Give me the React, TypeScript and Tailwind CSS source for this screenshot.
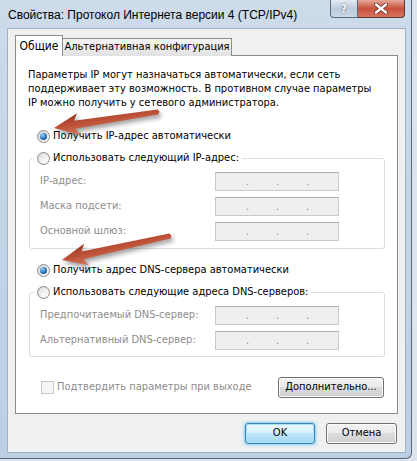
import React from "react";

const body = "font-['DejaVu_Sans_Condensed','DejaVu_Sans',sans-serif] font-stretch-condensed text-[11px]";

function Radio({ checked }: { checked?: boolean }) {
  return (
    <span className="flex h-[13px] w-[13px] shrink-0 items-center justify-center rounded-full border border-[#8c8c8c] bg-linear-to-br from-[#d4d4d4] to-[#fbfbfb]">
      {checked ? (
        <span className="h-[7px] w-[7px] rounded-full bg-[radial-gradient(circle_at_35%_30%,#9ad4ff,#2a72b8_55%,#0d3f75)]" />
      ) : (
        <span className="h-[9px] w-[9px] rounded-full bg-linear-to-br from-[#e2e2e2] to-[#ffffff]" />
      )}
    </span>
  );
}

function IpBox() {
  return (
    <div className="flex h-[19px] w-[124px] items-end border border-[#cacaca] border-t-[#adadad] bg-[#efefef] pb-[3px] pl-[30px] leading-[11px] text-[#8a8a8a]">
      <span className="w-[30px]">.</span>
      <span className="w-[30px]">.</span>
      <span className="w-[30px]">.</span>
    </div>
  );
}

function Field({ label }: { label: string }) {
  return (
    <div className="flex h-[19px] items-center pl-[10px]">
      <span className="w-[175px] text-[#8d8d8d]">{label}</span>
      <IpBox />
    </div>
  );
}

function Arrow({ x1, y1, x2, y2 }: { x1: number; y1: number; x2: number; y2: number }) {
  const dx = x2 - x1;
  const dy = y2 - y1;
  const L = Math.sqrt(dx * dx + dy * dy);
  const ang = (Math.atan2(dy, dx) * 180) / Math.PI;
  const pts = `0,0 -25,-11 -21,-4 ${-L},-2.6 ${-L - 1.5},0 ${-L},2.6 -21,4 -25,11`;
  return (
    <g>
      <g transform={`translate(${x2 + 2},${y2 + 3}) rotate(${ang})`} filter="url(#blur)">
        <polygon points={pts} fill="#2a2a2a" opacity="0.45" />
      </g>
      <g transform={`translate(${x2},${y2}) rotate(${ang})`}>
        <polygon points={pts} fill="url(#arrowGrad)" />
      </g>
    </g>
  );
}

function Button({ children, w, primary }: { children: React.ReactNode; w: string; primary?: boolean }) {
  return (
    <div
      className={
        primary
          ? `${w} flex h-[21px] items-center justify-center rounded-[3px] border border-[#3c7fb1] bg-[linear-gradient(180deg,#eaf6fd_0%,#d9f0fc_45%,#bee6fd_50%,#a7d9f5_100%)] shadow-[0_0_3px_1px_#7fd0f5,inset_0_0_0_1px_#a6e3ff]`
          : `${w} flex h-[21px] items-center justify-center rounded-[3px] border border-[#707070] bg-[linear-gradient(180deg,#f2f2f2_0%,#ebebeb_45%,#dddddd_50%,#cfcfcf_100%)] shadow-[inset_0_0_0_1px_#fbfbfb]`
      }
    >
      {children}
    </div>
  );
}

export default function App() {
  return (
    <div className={`relative h-[461px] w-[417px] overflow-hidden bg-[#dde4ec] ${body} text-black`}>
      <div className="h-[459px] w-[412px] rounded-br-[6px] border-b border-r border-[#55677c] bg-linear-to-b from-[#cddbea] via-[#c2d4e6] to-[#bcd0e4]">
        <div className="flex h-[28px] items-start justify-between">
          <div className="pl-[8px] pt-[7px] font-['Liberation_Sans',sans-serif] text-[12px] leading-[16px] text-[#000]">
            Свойства: Протокол Интернета версии 4 (TCP/IPv4)
          </div>
          <div className="mr-[6px] flex">
            <div className="flex h-[18px] w-[28px] items-center justify-center rounded-bl-[4px] border border-t-0 border-[#5b6b7e] bg-linear-to-b from-[#e4ebf3] via-[#bccbdc] to-[#c8d6e5] font-['DejaVu_Sans',sans-serif] text-[12px] font-bold text-[#f4f7fa] [text-shadow:0_0_2px_#44556a]">
              ?
            </div>
            <div className="flex h-[18px] w-[47px] items-center justify-center rounded-br-[4px] border border-l-0 border-t-0 border-[#5b3a34] bg-linear-to-b from-[#e5a89a] via-[#c9503a] to-[#d7735d]">
              <svg width="14" height="11" viewBox="0 0 14 11">
                <path d="M2 1.5 L12 9.5 M12 1.5 L2 9.5" stroke="#6b2a20" strokeWidth="4" strokeLinecap="round" />
                <path d="M2 1.5 L12 9.5 M12 1.5 L2 9.5" stroke="#ffffff" strokeWidth="2.4" strokeLinecap="round" />
              </svg>
            </div>
          </div>
        </div>
        <div className="ml-[7px] h-[425px] w-[399px] border border-[#9fb2c8] bg-[#f0f0f0] px-[7px] pt-[6px]">
          <div className="flex h-[21px] items-end">
            <div className="relative z-10 flex h-[21px] w-[48px] items-center justify-center border border-b-0 border-[#898c95] bg-white pb-[1px] text-[12px]">
              Общие
            </div>
            <div className="-ml-px flex h-[18px] w-[170px] items-center justify-center border border-b-0 border-[#898c95] bg-linear-to-b from-[#f4f4f4] to-[#e2e2e2] text-[11px]">
              Альтернативная конфигурация
            </div>
          </div>
          <div className="-mt-px h-[359px] w-[383px] border border-[#898c95] bg-white">
            <div className="pl-[12px] pt-[12px] leading-[14px]">
              <div>Параметры IP могут назначаться автоматически, если сеть</div>
              <div>поддерживает эту возможность. В противном случае параметры</div>
              <div>IP можно получить у сетевого администратора.</div>
            </div>
            <div className="ml-[21px] mt-[19px] flex h-[15px] items-center gap-[3px]">
              <Radio checked />
              <span>Получить IP-адрес автоматически</span>
            </div>
            <fieldset className="ml-[13px] mr-[12px] mt-[7px] rounded-[3px] border border-[#d5dfe5] pb-[7px]">
              <legend className="ml-[4px] px-[3px]">
                <span className="flex h-[15px] items-center gap-[3px]">
                  <Radio />
                  <span>Использовать следующий IP-адрес:</span>
                </span>
              </legend>
              <div className="mt-[6px] flex flex-col gap-[6px]">
                <Field label="IP-адрес:" />
                <Field label="Маска подсети:" />
                <Field label="Основной шлюз:" />
              </div>
            </fieldset>
            <div className="ml-[21px] mt-[14px] flex h-[15px] items-center gap-[3px]">
              <Radio checked />
              <span>Получить адрес DNS-сервера автоматически</span>
            </div>
            <fieldset className="ml-[13px] mr-[12px] mt-[7px] rounded-[3px] border border-[#d5dfe5] pb-[6px]">
              <legend className="ml-[4px] px-[3px]">
                <span className="flex h-[15px] items-center gap-[3px]">
                  <Radio />
                  <span>Использовать следующие адреса DNS-серверов:</span>
                </span>
              </legend>
              <div className="mt-[6px] flex flex-col gap-[6px]">
                <Field label="Предпочитаемый DNS-сервер:" />
                <Field label="Альтернативный DNS-сервер:" />
              </div>
            </fieldset>
            <div className="mt-[20px] flex h-[21px] items-center pl-[25px] pr-[13px]">
              <span className="h-[13px] w-[13px] border border-[#c8c8c8] bg-[#f5f5f5]" />
              <span className="ml-[3px] text-[#8d8d8d]">Подтвердить параметры при выходе</span>
              <div className="ml-auto">
                <Button w="w-[106px]">Дополнительно...</Button>
              </div>
            </div>
          </div>
          <div className="mt-[9px] flex justify-end gap-[11px] pr-px">
            <Button w="w-[70px]" primary>
              OK
            </Button>
            <Button w="w-[71px]">Отмена</Button>
          </div>
        </div>
      </div>
      <svg className="pointer-events-none absolute left-0 top-0" width="417" height="461">
        <defs>
          <filter id="blur" x="-20%" y="-50%" width="140%" height="200%">
            <feGaussianBlur stdDeviation="2" />
          </filter>
          <linearGradient id="arrowGrad" x1="0" y1="0" x2="0" y2="1">
            <stop offset="0" stopColor="#d77a62" />
            <stop offset="0.5" stopColor="#bd5238" />
            <stop offset="1" stopColor="#9c3a25" />
          </linearGradient>
        </defs>
        <Arrow x1={158} y1={112} x2={54} y2={128} />
        <Arrow x1={170} y1={236} x2={62} y2={260} />
      </svg>
    </div>
  );
}
